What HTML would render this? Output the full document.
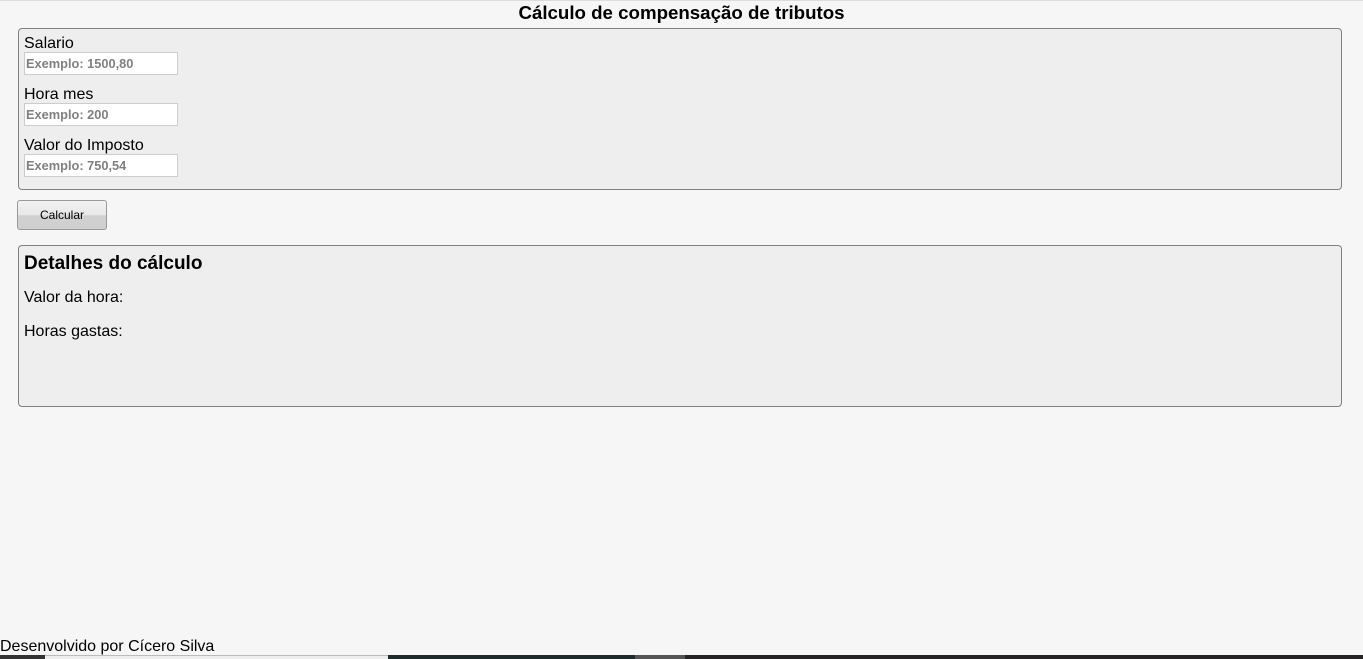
<!DOCTYPE html>
<html><head><meta charset="utf-8"><style>
*{box-sizing:border-box;margin:0;padding:0}
html,body{width:1363px;height:659px;overflow:hidden;background:#f6f6f6;font-family:"Liberation Sans",Arial,sans-serif;color:#000}
.top{position:absolute;left:0;top:0;width:1363px;height:1px;background:#ddd}
h1{position:absolute;left:0;width:1363px;top:3px;text-align:center;font-size:18.7px;font-weight:bold;line-height:20px}
.box{position:absolute;left:18px;width:1324px;background:#eee;border:1px solid #808080;border-radius:4px}
.lbl{position:absolute;left:5px;font-size:16px;line-height:18px}
.inp{position:absolute;left:5px;width:154px;height:23px;background:#fff;border:1px solid #ccc;font-size:12.8px;font-weight:bold;color:#808080;padding:3px 0 0 1px}
.btn{position:absolute;left:17px;top:200px;width:90px;height:30px;border:1px solid #999;border-radius:3px;background:linear-gradient(#f2f2f2 0%,#e8e8e8 50%,#d0d0d0 52%,#cfcfcf 100%);font-size:12px;text-align:center;line-height:29px}
.foot{position:absolute;left:0;top:638px;font-size:16px;line-height:18px}
.bar{position:absolute;top:655px;height:4px}
</style></head><body>
<div class="top"></div>
<h1>Cálculo de compensação de tributos</h1>
<div class="box" style="top:28px;height:162px">
 <div class="lbl" style="top:6px">Salario</div>
 <div class="inp" style="top:23px">Exemplo: 1500,80</div>
 <div class="lbl" style="top:57px">Hora mes</div>
 <div class="inp" style="top:74px">Exemplo: 200</div>
 <div class="lbl" style="top:108px">Valor do Imposto</div>
 <div class="inp" style="top:125px">Exemplo: 750,54</div>
</div>
<div class="btn">Calcular</div>
<div class="box" style="top:245px;height:162px">
 <div class="lbl" style="top:7px;font-size:19px;font-weight:bold;line-height:22px">Detalhes do cálculo</div>
 <div class="lbl" style="top:43px">Valor da hora:</div>
 <div class="lbl" style="top:77px">Horas gastas:</div>
</div>
<div class="foot">Desenvolvido por Cícero Silva</div>
<div class="bar" style="left:0;width:45px;background:#333"></div>
<div class="bar" style="left:45px;width:343px;background:#eee;border-top:1px solid #bbb"></div>
<div class="bar" style="left:388px;width:247px;background:#1e2b2b"></div>
<div class="bar" style="left:635px;width:50px;background:#555"></div>
<div class="bar" style="left:685px;width:678px;background:#262424"></div>
</body></html>
